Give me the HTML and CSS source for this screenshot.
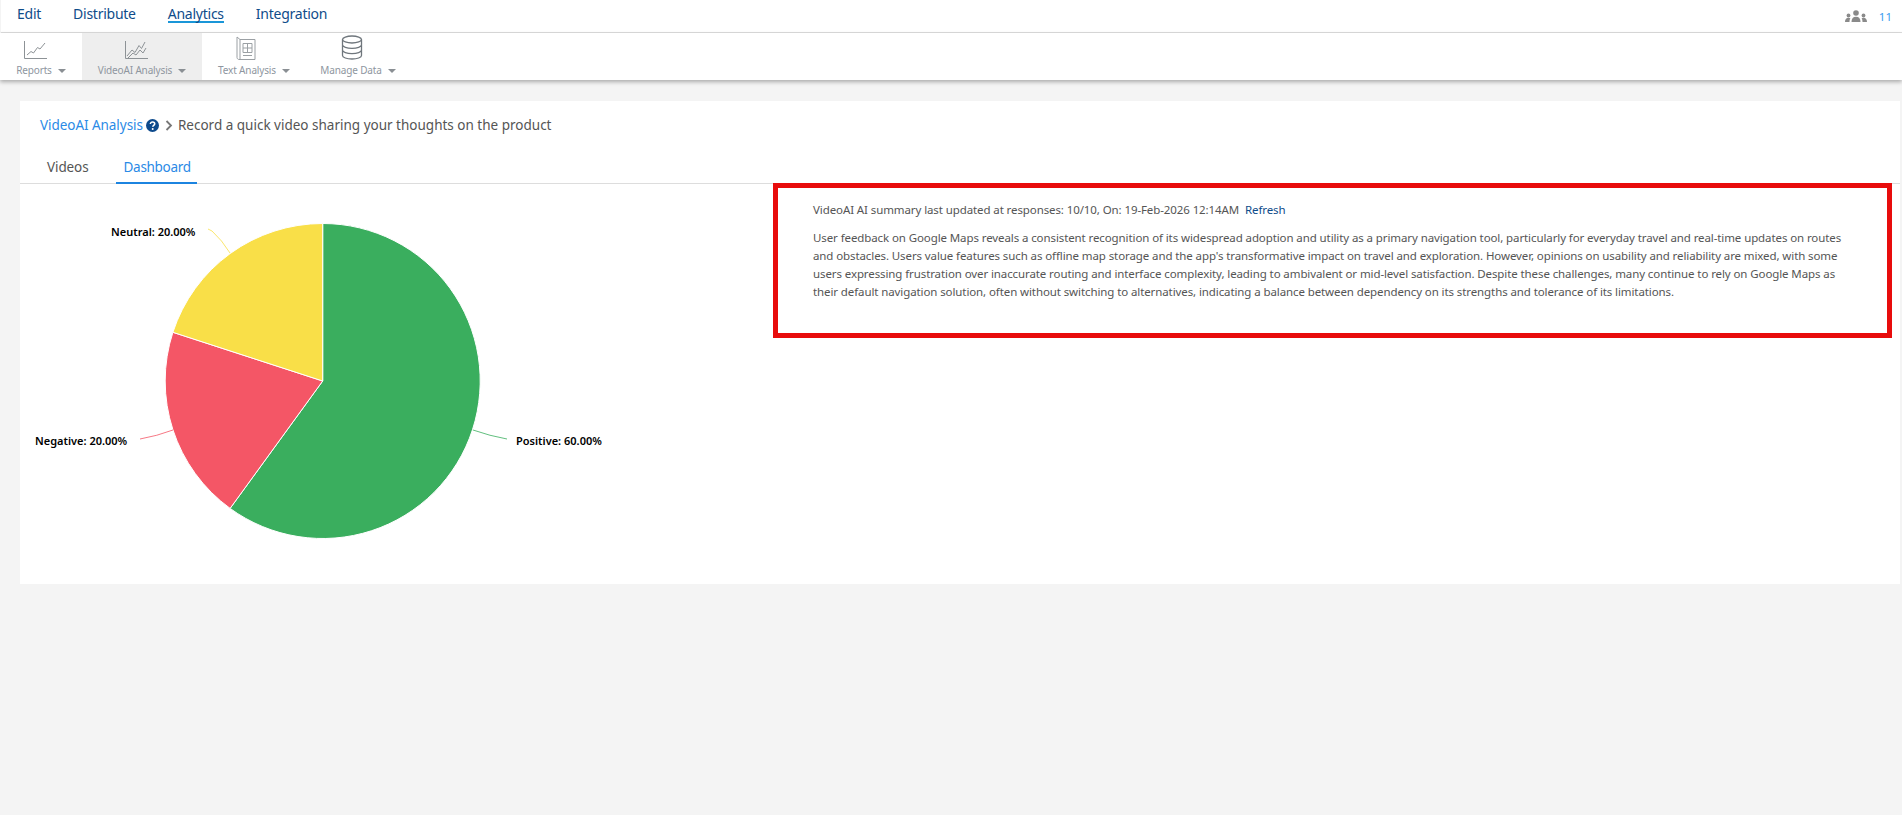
FILE: index.html
```html
<!DOCTYPE html>
<html lang="en">
<head>
<meta charset="utf-8">
<title>VideoAI Analysis</title>
<link rel="stylesheet" href="styles.css">
</head>
<body>
<header class="topnav">
  <nav class="topnav-links">
    <a class="topnav-link">Edit</a>
    <a class="topnav-link">Distribute</a>
    <a class="topnav-link is-active">Analytics</a>
    <a class="topnav-link">Integration</a>
  </nav>
  <div class="topnav-users">
    <svg class="users-icon" width="22" height="12" viewBox="0 0 22 12"><circle cx="11" cy="3" r="2.8"/><path d="M6.500 12c0-3.400 1.600-5.200 4.500-5.200s4.500 1.800 4.500 5.200z"/><circle cx="3.500" cy="5.500" r="1.900"/><path d="M0 12c0-2.600 1.200-4.200 3.500-4.200.8 0 1.400.2 1.900.5C4.700 9.300 4.500 10.500 4.500 12z"/><circle cx="18.500" cy="5.500" r="1.900"/><path d="M22 12c0-2.600-1.200-4.200-3.500-4.200-.8 0-1.400.2-1.900.5.700 1 .9 2.200.9 3.700z"/></svg>
    <span class="users-count">11</span>
  </div>
</header>
<div class="toolbar">
  <div class="tool tool-reports">
    <svg class="tool-icon" width="24" height="20" viewBox="0 0 24 20"><path class="ln" d="M1.500 1v17.500H24"/><path class="ln" d="M4 15l4-3.500 2.500 1.500 4-5.500 2.500 1.500L22 3"/></svg>
    <span class="tool-label">Reports<i class="caret"></i></span>
  </div>
  <div class="tool tool-video is-active">
    <svg class="tool-icon" width="24" height="20" viewBox="0 0 24 20"><path class="ln" d="M1.500 1v17.500H24"/><path class="ln" d="M3 16l5-6 3 2.500 4-7 2.500 3L21 2"/><path class="ln" d="M4 18l5-5 3 2 4-5 3 3 3-5"/></svg>
    <span class="tool-label">VideoAI Analysis<i class="caret"></i></span>
  </div>
  <div class="tool tool-text">
    <svg class="tool-icon tool-icon-book" width="20" height="24" viewBox="0 0 20 24"><path class="ln" d="M1 1v20.500c0 1 1 2 2 2h16"/><path class="ln" d="M1 1l3 2.500h15v20"/><path class="ln" d="M4 3.500v20"/><path class="ln" d="M7 7.500h9v9H7zM11.500 7.500v9M7 12h9M7 19.500h9"/></svg>
    <span class="tool-label">Text Analysis<i class="caret"></i></span>
  </div>
  <div class="tool tool-data">
    <svg class="tool-icon tool-icon-db" width="22" height="25" viewBox="0 0 22 25"><ellipse class="ln" cx="11" cy="4.500" rx="9.500" ry="3.500"/><path class="ln" d="M1.500 4.500v16c0 2 4.300 3.500 9.500 3.500s9.500-1.500 9.500-3.500v-16M1.500 9.800c0 2 4.300 3.500 9.500 3.500s9.500-1.500 9.500-3.500M1.500 15.100c0 2 4.300 3.500 9.500 3.500s9.500-1.500 9.500-3.500"/></svg>
    <span class="tool-label">Manage Data<i class="caret"></i></span>
  </div>
</div>
<main class="page">
  <section class="card">
    <div class="crumbs">
      <a class="crumb-link">VideoAI Analysis</a>
      <svg class="help-icon" width="13" height="13" viewBox="0 0 13 13"><circle cx="6.500" cy="6.500" r="6.500"/><path class="help-q" d="M4.400 5c0-1.300 1-2 2.200-2s2.100.7 2.100 1.800c0 1.600-1.900 1.500-1.900 2.900"/><circle class="help-dot" cx="6.700" cy="9.900" r="1"/></svg>
      <svg class="chev-icon" width="8" height="11" viewBox="0 0 8 11"><path d="M1.500 1l4.500 4.500L1.500 10"/></svg>
      <span class="crumb-text">Record a quick video sharing your thoughts on the product</span>
    </div>
    <div class="tabs">
      <a class="tab">Videos</a>
      <a class="tab is-active">Dashboard</a>
    </div>
    <div class="dash">
      <div class="chart">
        <svg width="753" height="400" viewBox="0 0 753 400">
          <path class="slice-pos" d="M302.700 40.500A157.500 157.500 0 1 1 210.100 325.400L302.700 198Z"/>
          <path class="slice-neg" d="M210.100 325.400A157.500 157.500 0 0 1 152.900 149.300L302.700 198Z"/>
          <path class="slice-neu" d="M152.900 149.300A157.500 157.500 0 0 1 302.700 40.500L302.700 198Z"/>
          <path class="lead lead-pos" d="M453 247Q470 253 487 256"/>
          <path class="lead lead-neg" d="M153 247Q137 253 120 256"/>
          <path class="lead lead-neu" d="M210 70Q202 57 192 48L188 46"/>
          <text class="pie-label" x="496" y="262">Positive: 60.00%</text>
          <text class="pie-label" x="15" y="262">Negative: 20.00%</text>
          <text class="pie-label" x="91" y="53">Neutral: 20.00%</text>
        </svg>
      </div>
      <aside class="summary">
        <p class="summary-meta">VideoAI AI summary last updated at responses: 10/10, On: 19-Feb-2026 12:14AM <a class="refresh">Refresh</a></p>
        <p class="summary-body">User feedback on Google Maps reveals a consistent recognition of its widespread adoption and utility as a primary navigation tool, particularly for everyday travel and real-time updates on routes and obstacles. Users value features such as offline map storage and the app's transformative impact on travel and exploration. However, opinions on usability and reliability are mixed, with some users expressing frustration over inaccurate routing and interface complexity, leading to ambivalent or mid-level satisfaction. Despite these challenges, many continue to rely on Google Maps as their default navigation solution, often without switching to alternatives, indicating a balance between dependency on its strengths and tolerance of its limitations.</p>
      </aside>
    </div>
  </section>
</main>
</body>
</html>
```

FILE: styles.css
```css
* { box-sizing: border-box; }
html, body { margin: 0; height: 100%; }
body {
  background: #f4f4f4;
  font-family: "Noto Sans", "Open Sans", sans-serif;
  color: #555;
  overflow: hidden;
}
.topnav {
  height: 33px;
  background: #fff;
  border-bottom: 1px solid #ddd;
  margin-left: 1px;
  display: flex;
  justify-content: space-between;
  padding: 0 10px 0 16px;
}
.topnav-links { display: flex; gap: 32px; }
.topnav-link {
  font-size: 14px;
  line-height: 20px;
  height: 20px;
  margin-top: 4px;
  color: #0f4c8a;
  letter-spacing: -0.25px;
}
.topnav-link.is-active { height: 19px; border-bottom: 2px solid #1a96d8; }
.topnav-users { display: flex; align-items: center; gap: 12px; }
.users-icon { fill: #8a8a8a; }
.users-count { color: #3c9cf0; font-size: 11.500px; }
.toolbar {
  height: 47px;
  background: #fff;
  display: flex;
  box-shadow: 0 2px 4px rgba(0,0,0,.3);
  position: relative;
}
.tool {
  display: flex;
  flex-direction: column;
  align-items: center;
  justify-content: flex-end;
  padding-bottom: 3px;
}
.tool.is-active { background: #eee; }
.tool-reports { width: 82px; }
.tool-video { width: 120px; }
.tool-text { width: 104px; }
.tool-data { width: 104px; }
.tool-icon { display: block; margin: 0 12px 3px 0; }
.ln { fill: none; stroke: #8d9296; stroke-width: 1; }
.tool-icon-book { margin-right: 16px; }
.tool-icon-book .ln { stroke: #9ba0a4; }
.tool-icon-db .ln { stroke: #6f767c; stroke-width: 1.300; }
.tool-label {
  font-size: 10px;
  line-height: 14px;
  color: #8e96a0;
  letter-spacing: -0.15px;
  white-space: nowrap;
}
.caret {
  display: inline-block;
  margin-left: 6px;
  vertical-align: middle;
  border-left: 4px solid transparent;
  border-right: 4px solid transparent;
  border-top: 4px solid #8a8f94;
}
.page { padding: 21px 2px 0 20px; }
.card {
  background: #fff;
  height: 483px;
}
.crumbs {
  display: flex;
  align-items: center;
  padding: 6px 0 0 20px;
  height: 42px;
  font-size: 13.500px;
}
.crumb-link { color: #2b8ae6; letter-spacing: -0.05px; }
.help-icon { margin-left: 3px; fill: #0d4a8c; }
.help-q { fill: none; stroke: #fff; stroke-width: 1.600; }
.help-dot { fill: #fff; }
.chev-icon { margin: 0 5px 0 6px; }
.chev-icon path { fill: none; stroke: #777; stroke-width: 1.800; }
.crumb-text { color: #555; }
.tabs {
  display: flex;
  margin-top: 9px;
  height: 32px;
  border-bottom: 1px solid #ddd;
}
.tab {
  font-size: 13.500px;
  line-height: 30px;
  padding: 0 8px;
  margin-left: 19px;
  color: #555;
  letter-spacing: -0.1px;
  margin-bottom: -1px;
}
.tab + .tab { margin-left: 19px; }
.tab.is-active {
  padding-right: 6px;
  color: #2b8ae6;
  letter-spacing: -0.3px;
  border-bottom: 2px solid #1c84e0;
}
.dash {
  display: flex;
  align-items: flex-start;
  margin-top: -1px;
}
.chart { width: 753px; flex: none; }
.chart svg { display: block; }
.slice-pos { fill: #3aae5e; stroke: #fff; stroke-width: 1; }
.slice-neg { fill: #f45666; stroke: #fff; stroke-width: 1; }
.slice-neu { fill: #f9df48; stroke: #fff; stroke-width: 1; }
.lead { fill: none; stroke-width: 0.8; }
.lead-pos { stroke: #3aae5e; }
.lead-neg { stroke: #f45666; }
.lead-neu { stroke: #f9df48; }
.pie-label {
  font-size: 11px;
  font-weight: 600;
  fill: #000;
}
.summary {
  width: 1119px;
  height: 155px;
  border: 5px solid #e80c0c;
  padding: 14px 25px 0 35px;
  font-size: 11.500px;
  line-height: 18px;
  color: #555;
  letter-spacing: -0.1px;
}
.summary-meta { margin: 0 0 11px; line-height: 16px; }
.refresh { color: #0f4c8a; margin-left: 3px; }
.summary-body { margin: 0; }
```
